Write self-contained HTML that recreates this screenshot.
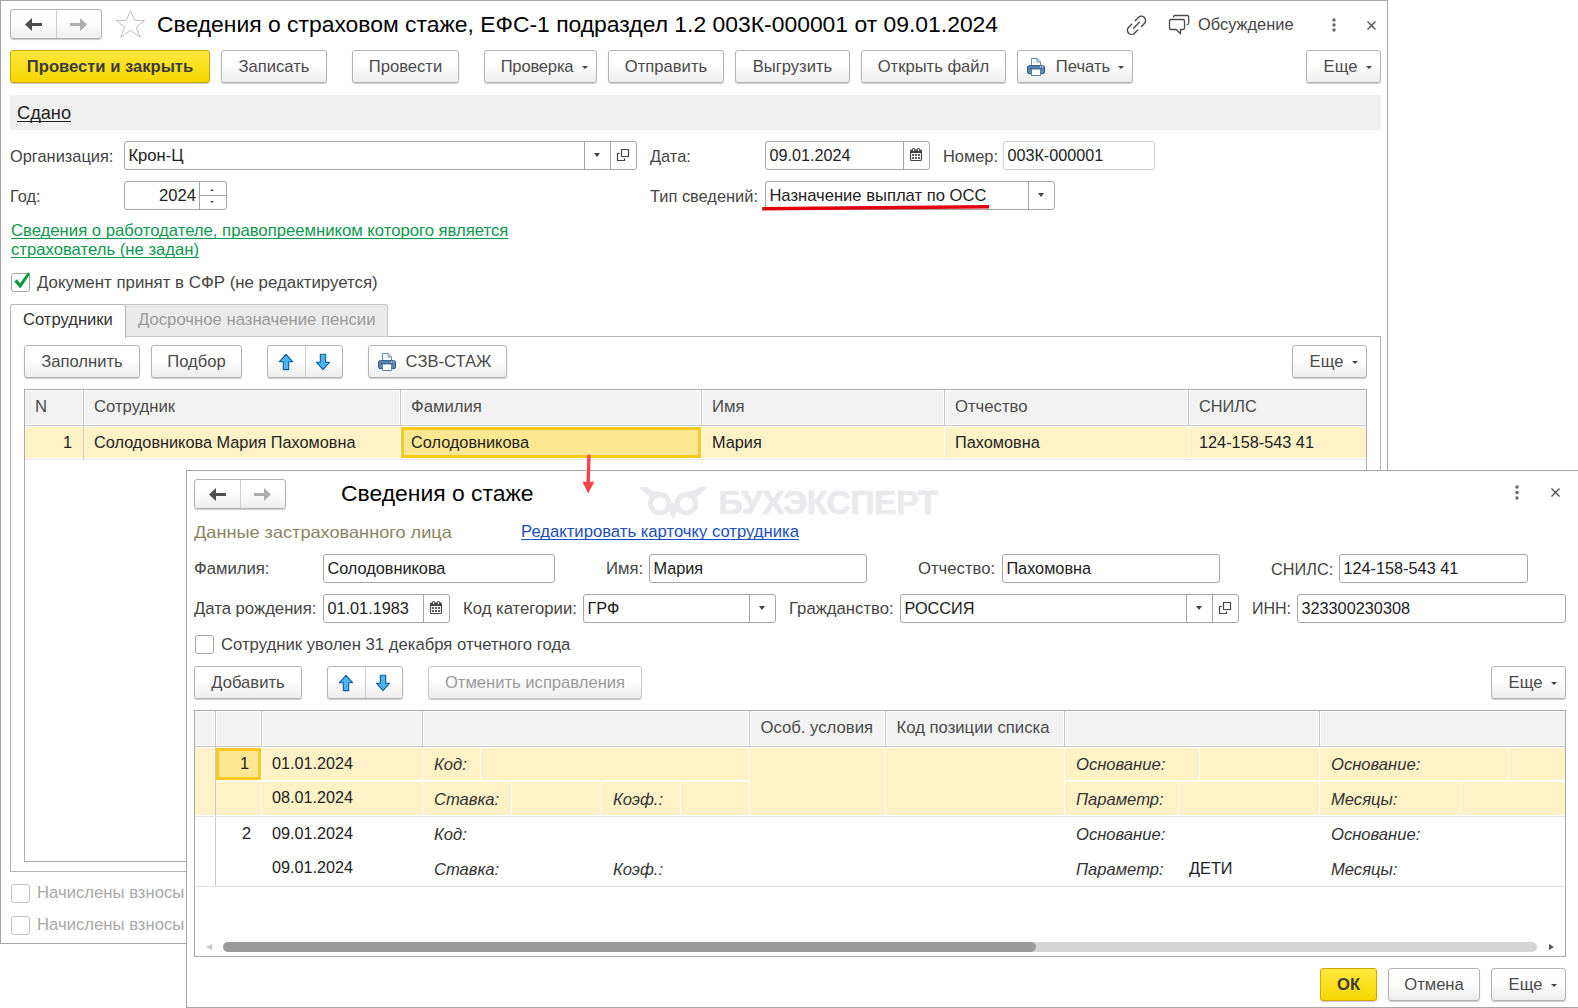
<!DOCTYPE html>
<html lang="ru"><head><meta charset="utf-8"><title>Сведения о страховом стаже</title>
<style>
*{box-sizing:border-box;margin:0;padding:0;text-decoration-skip-ink:none}
html,body{width:1578px;height:1008px;overflow:hidden;background:#fff}
body{position:relative;font-family:"Liberation Sans",sans-serif;font-size:16.6px;color:#333;line-height:20px}
.a{position:absolute;white-space:nowrap}
.btn{position:absolute;height:33px;border:1px solid #b4b4b4;border-radius:3px;background:linear-gradient(#fff 0%,#fff 40%,#ededed 100%);box-shadow:0 1px 1px rgba(0,0,0,.22);color:#4a4a4a;text-align:center;line-height:31px;white-space:nowrap}
.btn.y{background:linear-gradient(#ffe93c,#f7d600);border-color:#c9a800;color:#3c3c3c;font-weight:bold}
.btn.dis{color:#9a9a9a}
.inp{position:absolute;height:29px;border:1px solid #a6a6a6;border-radius:3px;background:#fff;line-height:27px;padding-left:3.4px;color:#222;white-space:nowrap;overflow:hidden}
.inp .sb{position:absolute;top:0;bottom:0;width:26px;border-left:1px solid #a6a6a6}
.lbl{position:absolute;white-space:nowrap;color:#454545;line-height:20px;font-size:16.4px;padding-top:1px}
.tri{position:absolute;width:0;height:0;border-left:4px solid transparent;border-right:4px solid transparent;border-top:5px solid #444}
.cb{position:absolute;width:19px;height:19px;border:1px solid #a6a6a6;border-radius:3px;background:#fff}
.th{position:absolute;background:#f2f2f2;color:#4a4a4a;line-height:33px;font-size:16.7px;padding-left:10px;white-space:nowrap;overflow:hidden}
.td{position:absolute;line-height:33px;font-size:16.3px;padding-left:10px;color:#222;white-space:nowrap;overflow:hidden}
.td.it{font-style:italic;font-size:16.6px;color:#333}
#dlgc .lbl{font-size:16.7px}
#dlgc .inp{font-size:16.3px}
.num{font-size:16.2px}
</style></head><body>
<!-- MAIN WINDOW -->
<div id="main" class="a" style="left:0;top:0;width:1388px;height:944px;border:1px solid #a6a6a6;background:#fff"></div>
<!--MAINSTART-->
<!-- nav buttons -->
<div class="btn" style="left:10px;top:9px;width:92px;height:30px"></div>
<div class="a" style="left:56px;top:10px;width:1px;height:28px;background:#cfcfcf"></div>
<svg class="a" style="left:24px;top:17px" width="19" height="15" viewBox="0 0 19 15"><path d="M1 7.5 L8 1 L8 5.9 L18 5.9 L18 9.1 L8 9.1 L8 14 Z" fill="#4d4d4d"/></svg>
<svg class="a" style="left:69px;top:17px" width="19" height="15" viewBox="0 0 19 15"><path d="M18 7.5 L11 1 L11 5.9 L1 5.9 L1 9.1 L11 9.1 L11 14 Z" fill="#adadad"/></svg>
<!-- star -->
<svg class="a" style="left:115px;top:9px" width="31" height="31" viewBox="0 0 31 31"><path d="M15.50 1.77 L19.79 11.42 L29.64 11.42 L21.25 18.44 L25.25 28.29 L15.50 21.47 L5.65 28.29 L9.55 18.44 L1.46 11.42 L11.31 11.42 Z" fill="#fff" stroke="#b8bfc9" stroke-width="1" stroke-linejoin="miter"/></svg>
<div class="a" style="left:157px;top:9px;font-size:22.9px;line-height:30px;color:#000">Сведения о страховом стаже, ЕФС-1 подраздел 1.2 003К-000001 от 09.01.2024</div>
<!-- right header icons -->
<svg class="a" style="left:1124px;top:13px" width="26" height="26" viewBox="0 0 26 26" fill="none" stroke="#4a4a4a" stroke-width="1.4" stroke-linecap="round"><g transform="translate(12.5 12.3) rotate(-45)"><path d="M2.6 -4.2 L6.9 -4.2 A4.2 4.2 0 0 1 6.9 4.2 L2.6 4.2"/><path d="M-2.6 4.2 L-6.9 4.2 A4.2 4.2 0 0 1 -6.9 -4.2 L-2.6 -4.2"/><path d="M-4.2 0 L4.2 0"/></g></svg>
<svg class="a" style="left:1166px;top:12px" width="26" height="26" viewBox="0 0 26 26" fill="none" stroke="#4a4a4a" stroke-width="1.3" stroke-linejoin="round" stroke-linecap="round"><path d="M7.4 5 Q7.5 3.5 9 3.5 H21.2 Q22.7 3.5 22.7 5.2 V11 Q22.7 12.5 21.2 12.6"/><path d="M5 7.5 H17 Q18.5 7.5 18.5 9 V16 Q18.5 17.5 17 17.5 H14.5 V21.8 L10.3 17.5 H5 Q3.5 17.5 3.5 16 V9 Q3.5 7.5 5 7.5 Z"/></svg>
<div class="lbl" style="left:1198px;top:13px">Обсуждение</div>
<svg class="a" style="left:1330.5px;top:17px" width="6" height="16" viewBox="0 0 6 16"><circle cx="3" cy="3" r="1.7" fill="#666"/><circle cx="3" cy="8" r="1.7" fill="#666"/><circle cx="3" cy="13" r="1.7" fill="#666"/></svg>
<svg class="a" style="left:1366px;top:20px" width="11" height="11" viewBox="0 0 11 11"><path d="M1.5 1.5 L9.5 9.5 M9.5 1.5 L1.5 9.5" stroke="#555" stroke-width="1.4"/></svg>
<!-- command bar -->
<div class="btn y" style="left:10px;top:50px;width:200px">Провести и закрыть</div>
<div class="btn" style="left:221px;top:50px;width:106px">Записать</div>
<div class="btn" style="left:352px;top:50px;width:107px">Провести</div>
<div class="btn" style="left:484px;top:50px;width:113px;padding-right:7px;letter-spacing:-0.2px">Проверка<i class="tri" style="right:8px;top:15px;border-width:3px 3px 0 3px"></i></div>
<div class="btn" style="left:608px;top:50px;width:116px">Отправить</div>
<div class="btn" style="left:735px;top:50px;width:115px">Выгрузить</div>
<div class="btn" style="left:861px;top:50px;width:145px">Открыть файл</div>
<div class="btn" style="left:1017px;top:50px;width:116px;padding-left:24px;padding-right:8px">Печать<i class="tri" style="right:8px;top:15px;border-width:3px 3px 0 3px"></i></div>
<svg class="a prn" style="left:1026px;top:57px" width="20" height="20" viewBox="0 0 20 20"><path d="M5.5 8.5 V1.5 H11 L14.5 5 V8.5 Z" fill="#fff" stroke="#6a8bb0" stroke-width="1"/><path d="M11 1.5 V5 H14.5" fill="none" stroke="#6a8bb0" stroke-width="1"/><rect x="1.5" y="8.7" width="17" height="8" rx="1.6" fill="#5b86b2" stroke="#2f5a8a" stroke-width="1"/><rect x="4" y="11" width="12" height="1.1" fill="#2d5583"/><path d="M5.5 12 V18.5 H14.5 V12 Z" fill="#fff" stroke="#5d7fa6" stroke-width="1"/><rect x="14" y="9.4" width="1" height="1" fill="#fff"/><rect x="16" y="9.4" width="1" height="1" fill="#fff"/></svg>
<div class="btn" style="left:1306px;top:50px;width:75px;padding-right:6px">Еще<i class="tri" style="right:8px;top:15px;border-width:3px 3px 0 3px"></i></div>
<!-- status bar -->
<div class="a" style="left:10px;top:95px;width:1371px;height:35px;background:#f0f0f0"></div>
<div class="a" style="left:17px;top:103px;font-size:18.2px;color:#222;text-decoration:underline;text-underline-offset:2px">Сдано</div>
<!-- row 1 -->
<div class="lbl" style="left:10px;top:145px">Организация:</div>
<div class="inp" style="left:124px;top:141px;width:513px">Крон-Ц<span class="sb" style="right:26px"><i class="tri" style="left:9px;top:11px;border-width:4px 3px 0 3px"></i></span><span class="sb" style="right:0"><svg class="a" style="left:5px;top:6px" width="14" height="14" viewBox="0 0 14 14" fill="none" stroke="#444" stroke-width="1.2"><path d="M5.5 1.5 H12.5 V8.5 H5.5 Z"/><path d="M3.9 5.5 H1.5 V12.5 H8.5 V10.2"/></svg></span></div>
<div class="lbl" style="left:650px;top:145px">Дата:</div>
<div class="inp num" style="left:765px;top:141px;width:165px">09.01.2024<span class="sb" style="right:0;width:26px"><svg class="a cal" style="left:6px;top:6px" width="12" height="13" viewBox="0 0 12 13"><rect x="2" y="0" width="3.2" height="4" rx="1.5" fill="#444"/><rect x="6.9" y="0" width="3.2" height="4" rx="1.5" fill="#444"/><rect x="0" y="1.6" width="12" height="11.4" rx="1.6" fill="#444"/><rect x="1.1" y="5.1" width="9.8" height="6.8" rx="0.4" fill="#fff"/><rect x="3" y="0.9" width="1.2" height="2.2" rx="0.6" fill="#fff"/><rect x="7.9" y="0.9" width="1.2" height="2.2" rx="0.6" fill="#fff"/><g fill="#333"><rect x="2.2" y="6.1" width="1.8" height="1.8"/><rect x="5.1" y="6.1" width="1.8" height="1.8"/><rect x="8.1" y="6.1" width="1.8" height="1.8"/><rect x="2.2" y="9.1" width="1.8" height="1.8"/><rect x="5.1" y="9.1" width="1.8" height="1.8"/><rect x="8.1" y="9.1" width="1.8" height="1.8"/></g></svg></span></div>
<div class="lbl" style="left:943px;top:145px">Номер:</div>
<div class="inp num" style="left:1003px;top:141px;width:152px;border-color:#d0d0d0">003К-000001</div>
<!-- row 2 -->
<div class="lbl" style="left:10px;top:185px">Год:</div>
<div class="inp" style="left:124px;top:181px;width:103px;text-align:right;padding-right:30px">2024<span class="sb" style="right:0;width:27px"><i class="a" style="left:0;right:0;top:13px;height:1px;background:#a6a6a6"></i><i class="tri" style="left:10px;top:6.5px;border-width:0 2.2px 2.6px 2.2px;border-top-color:transparent;border-bottom:2.6px solid #444"></i><i class="tri" style="left:10px;top:19px;border-width:2.6px 2.2px 0 2.2px"></i></span></div>
<div class="lbl" style="left:650px;top:185px">Тип сведений:</div>
<div class="inp" style="left:765px;top:181px;width:290px">Назначение выплат по ОСС<span class="sb" style="right:0;width:26px"><i class="tri" style="left:9px;top:11px;border-width:4px 3px 0 3px"></i></span></div>
<svg class="a" style="left:760px;top:203px" width="232" height="10" viewBox="0 0 232 10"><path d="M2.2 5.7 L229 3.8" stroke="#e2000f" stroke-width="3.4" stroke-linecap="butt"/></svg>
<!-- green link -->
<div class="a" style="left:11px;top:221px;color:#0b9a4e;font-size:16.68px;text-decoration:underline;line-height:19px;text-underline-offset:2px;white-space:normal;width:520px">Сведения о работодателе, правопреемником которого является<br>страхователь (не задан)</div>
<!-- checkbox -->
<div class="cb" style="left:11px;top:273px"></div>
<svg class="a" style="left:13px;top:270.5px" width="18" height="19" viewBox="0 0 18 19"><path d="M1.2 10.5 L4 8.3 L7 12.3 L15 1.3 L17.2 3 L7.3 17.5 Z" fill="#129a40"/></svg>
<div class="lbl" style="left:37px;top:272px;font-size:16.85px">Документ принят в СФР (не редактируется)</div>
<!-- tabs -->
<div class="a" style="left:10px;top:336px;width:1371px;height:536px;border:1px solid #b5b5b5"></div>
<div class="a" style="left:125px;top:304px;width:263px;height:33px;background:#eaeaea;border:1px solid #c6c6c6;border-left:none;border-radius:0 3px 0 0;color:#9a9a9a;line-height:29px;padding-left:13px;font-size:16.7px">Досрочное назначение пенсии</div>
<div class="a" style="left:10px;top:304px;width:116px;height:34px;background:#fff;border:1px solid #b5b5b5;border-bottom:none;border-radius:3px 3px 0 0;color:#333;line-height:29px;padding-left:12px">Сотрудники</div>
<!-- tab toolbar -->
<div class="btn" style="left:24px;top:345px;width:116px">Заполнить</div>
<div class="btn" style="left:151px;top:345px;width:91px">Подбор</div>
<div class="btn" style="left:267px;top:345px;width:76px"></div>
<div class="a" style="left:305px;top:346px;width:1px;height:31px;background:#cfcfcf"></div>
<svg class="a" style="left:278px;top:353px" width="16" height="18" viewBox="0 0 16 18"><path d="M8 1.3 L14.6 8.7 L10.7 8.7 L10.7 16.6 L5.3 16.6 L5.3 8.7 L1.4 8.7 Z" fill="#4db2f1" stroke="#0d5c96" stroke-width="1.1" stroke-linejoin="round"/></svg>
<svg class="a" style="left:315px;top:353px" width="16" height="18" viewBox="0 0 16 18"><path d="M8 16.6 L14.6 9.2 L10.7 9.2 L10.7 1.3 L5.3 1.3 L5.3 9.2 L1.4 9.2 Z" fill="#4db2f1" stroke="#0d5c96" stroke-width="1.1" stroke-linejoin="round"/></svg>
<div class="btn" style="left:368px;top:345px;width:139px;padding-left:22px">СЗВ-СТАЖ</div>
<svg class="a prn" style="left:377px;top:352px" width="20" height="20" viewBox="0 0 20 20"><path d="M5.5 8.5 V1.5 H11 L14.5 5 V8.5 Z" fill="#fff" stroke="#6a8bb0" stroke-width="1"/><path d="M11 1.5 V5 H14.5" fill="none" stroke="#6a8bb0" stroke-width="1"/><rect x="1.5" y="8.7" width="17" height="8" rx="1.6" fill="#5b86b2" stroke="#2f5a8a" stroke-width="1"/><rect x="4" y="11" width="12" height="1.1" fill="#2d5583"/><path d="M5.5 12 V18.5 H14.5 V12 Z" fill="#fff" stroke="#5d7fa6" stroke-width="1"/><rect x="14" y="9.4" width="1" height="1" fill="#fff"/><rect x="16" y="9.4" width="1" height="1" fill="#fff"/></svg>
<div class="btn" style="left:1292px;top:345px;width:75px;padding-right:6px">Еще<i class="tri" style="right:8px;top:15px;border-width:3px 3px 0 3px"></i></div>
<!-- table -->
<div class="a" style="left:24px;top:389px;width:1343px;height:473px;border:1px solid #adadad;background:#fff"></div>
<div class="th" style="left:25px;top:391px;width:58px;height:33px;line-height:31px">N</div>
<div class="th" style="left:84px;top:391px;width:316px;height:33px;line-height:31px">Сотрудник</div>
<div class="th" style="left:401px;top:391px;width:300px;height:33px;line-height:31px">Фамилия</div>
<div class="th" style="left:702px;top:391px;width:242px;height:33px;line-height:31px">Имя</div>
<div class="th" style="left:945px;top:391px;width:243px;height:33px;line-height:31px">Отчество</div>
<div class="th" style="left:1189px;top:391px;width:177px;height:33px;line-height:31px;font-size:16.3px">СНИЛС</div>
<div class="a" style="left:25px;top:424px;width:1341px;height:3px;background:#fff"></div><div class="a" style="left:25px;top:425px;width:1341px;height:1px;background:#c8c8c8"></div>
<div class="a" style="left:25px;top:427px;width:1341px;height:31px;background:#fff2c6"></div>
<div class="a" style="left:25px;top:459px;width:1341px;height:1px;background:#e9e9e9"></div>
<div class="a" style="left:83px;top:426px;width:1px;height:34px;background:#cbcbcb"></div>
<div class="a" style="left:400px;top:426px;width:1px;height:33px;background:#fff"></div>
<div class="a" style="left:701px;top:426px;width:1px;height:33px;background:#fff"></div>
<div class="a" style="left:944px;top:426px;width:1px;height:33px;background:#fff"></div>
<div class="a" style="left:1188px;top:426px;width:1px;height:33px;background:#fff"></div>
<div class="a" style="left:82px;top:390px;width:3px;height:35px;background:#fff"></div><div class="a" style="left:83px;top:390px;width:1px;height:35px;background:#c6c6c6"></div>
<div class="a" style="left:399px;top:390px;width:3px;height:35px;background:#fff"></div><div class="a" style="left:400px;top:390px;width:1px;height:35px;background:#c6c6c6"></div>
<div class="a" style="left:700px;top:390px;width:3px;height:35px;background:#fff"></div><div class="a" style="left:701px;top:390px;width:1px;height:35px;background:#c6c6c6"></div>
<div class="a" style="left:943px;top:390px;width:3px;height:35px;background:#fff"></div><div class="a" style="left:944px;top:390px;width:1px;height:35px;background:#c6c6c6"></div>
<div class="a" style="left:1187px;top:390px;width:3px;height:35px;background:#fff"></div><div class="a" style="left:1188px;top:390px;width:1px;height:35px;background:#c6c6c6"></div>
<div class="td" style="left:25px;top:426px;width:58px;height:33px;text-align:right;padding-right:11px;padding-left:0">1</div>
<div class="td" style="left:84px;top:426px;width:316px;height:33px">Солодовникова Мария Пахомовна</div>
<div class="td" style="left:401px;top:427px;width:300px;height:31px;background:#fde791;border:3px solid #f9c920;line-height:25px;padding-left:7px">Солодовникова</div>
<div class="td" style="left:702px;top:426px;width:242px;height:33px">Мария</div>
<div class="td" style="left:945px;top:426px;width:243px;height:33px">Пахомовна</div>
<div class="td" style="left:1189px;top:426px;width:177px;height:33px">124-158-543 41</div>
<!-- bottom disabled checkboxes -->
<div class="cb" style="left:11px;top:884px;border-color:#c4c4c4"></div>
<div class="lbl" style="left:37px;top:882px;color:#a8a8a8;font-size:16.7px">Начислены взносы</div>
<div class="cb" style="left:11px;top:916px;border-color:#c4c4c4"></div>
<div class="lbl" style="left:37px;top:914px;color:#a8a8a8;font-size:16.7px">Начислены взносы</div>
<!-- red arrow -->
<svg class="a" style="left:580px;top:452px;z-index:50" width="18" height="44" viewBox="0 0 18 44"><path d="M8.9 4.3 L8.2 31" stroke="#f94348" stroke-width="3.4" stroke-linecap="round"/><path d="M2.4 29.8 L14.3 29.8 L8.2 41.6 Z" fill="#f94348"/></svg>
<!--MAINEND-->
<div id="dlg" class="a" style="left:186px;top:470px;width:1393px;height:538px;border:1px solid #a6a6a6;border-right:none;background:#fff;z-index:10"></div>
<div id="dlgc" class="a" style="left:0;top:0;width:1578px;height:1008px;z-index:20">
<!-- nav -->
<div class="btn" style="left:194px;top:479px;width:92px;height:30px"></div>
<div class="a" style="left:240px;top:480px;width:1px;height:28px;background:#cfcfcf"></div>
<svg class="a" style="left:208px;top:487px" width="19" height="15" viewBox="0 0 19 15"><path d="M1 7.5 L8 1 L8 5.9 L18 5.9 L18 9.1 L8 9.1 L8 14 Z" fill="#4d4d4d"/></svg>
<svg class="a" style="left:253px;top:487px" width="19" height="15" viewBox="0 0 19 15"><path d="M18 7.5 L11 1 L11 5.9 L1 5.9 L1 9.1 L11 9.1 L11 14 Z" fill="#adadad"/></svg>
<div class="a" style="left:341px;top:478px;font-size:22.9px;line-height:30px;color:#000">Сведения о стаже</div>
<!-- watermark -->
<svg class="a" style="left:636px;top:484px" width="75" height="40" viewBox="0 0 75 40" fill="#e9e9ee"><circle cx="23.7" cy="19.6" r="9.25" fill="none" stroke="#e9e9ee" stroke-width="5.3"/><circle cx="50.5" cy="19.6" r="9.25" fill="none" stroke="#e9e9ee" stroke-width="5.3"/><path d="M3.1 3 L10.7 3 Q15.5 7.6 23.4 7.6 L15 13.5 Q8 10 3.1 3 Z"/><path d="M71.1 3 L63.5 3 Q58.7 7.6 50.8 7.6 L59.2 13.5 Q66.2 10 71.1 3 Z"/><path d="M37.1 18 L41 24 L41.3 27 L37.3 36.2 L33.1 27 L33.4 24 Z"/></svg>
<div id="wm" class="a" style="left:718.5px;top:484px;font-size:33.6px;line-height:38px;font-weight:bold;color:#e9e9ee;letter-spacing:-0.35px;-webkit-text-stroke:0.7px #e9e9ee">БУХЭКСПЕРТ</div>
<svg class="a" style="left:1514px;top:484px" width="6" height="18" viewBox="0 0 6 18"><circle cx="3" cy="3" r="1.7" fill="#666"/><circle cx="3" cy="8.5" r="1.7" fill="#666"/><circle cx="3" cy="14" r="1.7" fill="#666"/></svg>
<svg class="a" style="left:1550px;top:487px" width="11" height="11" viewBox="0 0 11 11"><path d="M1.5 1.5 L9.5 9.5 M9.5 1.5 L1.5 9.5" stroke="#555" stroke-width="1.4"/></svg>
<div class="a" style="left:194px;top:522px;color:#8a8462;font-size:16.5px;transform:scaleX(1.10);transform-origin:0 0">Данные застрахованного лица</div>
<div class="a" style="left:521px;top:522px;color:#1b4fbd;font-size:16.66px;text-decoration:underline;text-underline-offset:2px">Редактировать карточку сотрудника</div>
<!-- row 1 -->
<div class="lbl" style="left:194px;top:558px">Фамилия:</div>
<div class="inp" style="left:323px;top:554px;width:232px">Солодовникова</div>
<div class="lbl" style="left:606px;top:558px">Имя:</div>
<div class="inp" style="left:649px;top:554px;width:218px">Мария</div>
<div class="lbl" style="left:918px;top:558px">Отчество:</div>
<div class="inp" style="left:1002px;top:554px;width:218px">Пахомовна</div>
<div class="lbl" style="left:1271px;top:558px;font-size:16.3px!important">СНИЛС:</div>
<div class="inp" style="left:1339px;top:554px;width:189px">124-158-543 41</div>
<!-- row 2 -->
<div class="lbl" style="left:194px;top:598px">Дата рождения:</div>
<div class="inp" style="left:323px;top:594px;width:127px">01.01.1983<span class="sb" style="right:0;width:26px"><svg class="a cal" style="left:6px;top:6px" width="12" height="13" viewBox="0 0 12 13"><rect x="2" y="0" width="3.2" height="4" rx="1.5" fill="#444"/><rect x="6.9" y="0" width="3.2" height="4" rx="1.5" fill="#444"/><rect x="0" y="1.6" width="12" height="11.4" rx="1.6" fill="#444"/><rect x="1.1" y="5.1" width="9.8" height="6.8" rx="0.4" fill="#fff"/><rect x="3" y="0.9" width="1.2" height="2.2" rx="0.6" fill="#fff"/><rect x="7.9" y="0.9" width="1.2" height="2.2" rx="0.6" fill="#fff"/><g fill="#333"><rect x="2.2" y="6.1" width="1.8" height="1.8"/><rect x="5.1" y="6.1" width="1.8" height="1.8"/><rect x="8.1" y="6.1" width="1.8" height="1.8"/><rect x="2.2" y="9.1" width="1.8" height="1.8"/><rect x="5.1" y="9.1" width="1.8" height="1.8"/><rect x="8.1" y="9.1" width="1.8" height="1.8"/></g></svg></span></div>
<div class="lbl" style="left:463px;top:598px">Код категории:</div>
<div class="inp" style="left:583px;top:594px;width:193px">ГРФ<span class="sb" style="right:0;width:26px"><i class="tri" style="left:9px;top:11px;border-width:4px 3px 0 3px"></i></span></div>
<div class="lbl" style="left:789px;top:598px">Гражданство:</div>
<div class="inp" style="left:900px;top:594px;width:339px">РОССИЯ<span class="sb" style="right:26px"><i class="tri" style="left:9px;top:11px;border-width:4px 3px 0 3px"></i></span><span class="sb" style="right:0"><svg class="a" style="left:5px;top:6px" width="14" height="14" viewBox="0 0 14 14" fill="none" stroke="#444" stroke-width="1.2"><path d="M5.5 1.5 H12.5 V8.5 H5.5 Z"/><path d="M3.9 5.5 H1.5 V12.5 H8.5 V10.2"/></svg></span></div>
<div class="lbl" style="left:1252px;top:598px;font-size:16px!important">ИНН:</div>
<div class="inp" style="left:1297px;top:594px;width:269px">323300230308</div>
<!-- checkbox -->
<div class="cb" style="left:195px;top:635px"></div>
<div class="lbl" style="left:221px;top:634px;font-size:16.7px">Сотрудник уволен 31 декабря отчетного года</div>
<!-- toolbar -->
<div class="btn" style="left:194px;top:666px;width:108px">Добавить</div>
<div class="btn" style="left:327px;top:666px;width:76px"></div>
<div class="a" style="left:365px;top:667px;width:1px;height:31px;background:#cfcfcf"></div>
<svg class="a" style="left:338px;top:674px" width="16" height="18" viewBox="0 0 16 18"><path d="M8 1.3 L14.6 8.7 L10.7 8.7 L10.7 16.6 L5.3 16.6 L5.3 8.7 L1.4 8.7 Z" fill="#4db2f1" stroke="#0d5c96" stroke-width="1.1" stroke-linejoin="round"/></svg>
<svg class="a" style="left:375px;top:674px" width="16" height="18" viewBox="0 0 16 18"><path d="M8 16.6 L14.6 9.2 L10.7 9.2 L10.7 1.3 L5.3 1.3 L5.3 9.2 L1.4 9.2 Z" fill="#4db2f1" stroke="#0d5c96" stroke-width="1.1" stroke-linejoin="round"/></svg>
<div class="btn dis" style="left:428px;top:666px;width:214px;border-color:#c8c8c8">Отменить исправления</div>
<div class="btn" style="left:1491px;top:666px;width:75px;padding-right:6px">Еще<i class="tri" style="right:8px;top:15px;border-width:3px 3px 0 3px"></i></div>
<!-- table -->
<div class="a" style="left:194px;top:710px;width:1372px;height:247px;border:1px solid #a9a9a9;background:#fff"></div>
<div class="a" style="left:195px;top:712px;width:1370px;height:33px;background:#f2f2f2"></div>
<div class="a" style="left:195px;top:745px;width:1370px;height:3px;background:#fff"></div><div class="a" style="left:195px;top:746px;width:1370px;height:1px;background:#c8c8c8"></div>
<div class="a" style="left:214px;top:711px;width:3px;height:35px;background:#fff"></div><div class="a" style="left:215px;top:711px;width:1px;height:35px;background:#c6c6c6"></div>
<div class="a" style="left:260px;top:711px;width:3px;height:35px;background:#fff"></div><div class="a" style="left:261px;top:711px;width:1px;height:35px;background:#c6c6c6"></div>
<div class="a" style="left:421px;top:711px;width:3px;height:35px;background:#fff"></div><div class="a" style="left:422px;top:711px;width:1px;height:35px;background:#c6c6c6"></div>
<div class="a" style="left:748px;top:711px;width:3px;height:35px;background:#fff"></div><div class="a" style="left:749px;top:711px;width:1px;height:35px;background:#c6c6c6"></div>
<div class="a" style="left:884px;top:711px;width:3px;height:35px;background:#fff"></div><div class="a" style="left:885px;top:711px;width:1px;height:35px;background:#c6c6c6"></div>
<div class="a" style="left:1063px;top:711px;width:3px;height:35px;background:#fff"></div><div class="a" style="left:1064px;top:711px;width:1px;height:35px;background:#c6c6c6"></div>
<div class="a" style="left:1318px;top:711px;width:3px;height:35px;background:#fff"></div><div class="a" style="left:1319px;top:711px;width:1px;height:35px;background:#c6c6c6"></div>
<div class="th" style="left:750px;top:711px;width:135px;height:34px;line-height:33px;font-size:16.7px;background:none;padding-left:10.5px">Особ. условия</div>
<div class="th" style="left:886px;top:711px;width:178px;height:34px;line-height:33px;font-size:16.7px;background:none;padding-left:10.5px">Код позиции списка</div>
<div class="a" style="left:195px;top:748px;width:1370px;height:67px;background:#fff2c6"></div>
<div class="a" style="left:215px;top:747px;width:1px;height:140px;background:#cbcbcb"></div>
<div class="a" style="left:261px;top:748px;width:1px;height:67px;background:#fff"></div>
<div class="a" style="left:422px;top:748px;width:1px;height:67px;background:#fff"></div>
<div class="a" style="left:749px;top:748px;width:1px;height:67px;background:#fff"></div>
<div class="a" style="left:885px;top:748px;width:1px;height:67px;background:#fff"></div>
<div class="a" style="left:1064px;top:748px;width:1px;height:67px;background:#fff"></div>
<div class="a" style="left:1319px;top:748px;width:1px;height:67px;background:#fff"></div>
<div class="a" style="left:216px;top:780px;width:533px;height:2px;background:linear-gradient(#fff 0,#fff 60%,#fff9e2 100%)"></div>
<div class="a" style="left:1065px;top:780px;width:500px;height:2px;background:linear-gradient(#fff 0,#fff 60%,#fff9e2 100%)"></div>
<div class="a" style="left:480px;top:748px;width:1px;height:32px;background:#fff"></div>
<div class="a" style="left:1199px;top:748px;width:1px;height:32px;background:#fff"></div>
<div class="a" style="left:1508px;top:748px;width:1px;height:32px;background:#fff"></div>
<div class="a" style="left:511px;top:782px;width:1px;height:33px;background:#fff"></div>
<div class="a" style="left:601px;top:782px;width:1px;height:33px;background:#fff"></div>
<div class="a" style="left:680px;top:782px;width:1px;height:33px;background:#fff"></div>
<div class="a" style="left:1178px;top:782px;width:1px;height:33px;background:#fff"></div>
<div class="a" style="left:1460px;top:782px;width:1px;height:33px;background:#fff"></div>
<div class="a" style="left:195px;top:816px;width:1370px;height:1px;background:#e4e4e4"></div>
<div class="a" style="left:195px;top:886px;width:1370px;height:1px;background:#e4e4e4"></div>
<div class="td" style="left:216px;top:748px;width:45px;height:32px;background:#fde791;border:3px solid #f9c920;line-height:25px;text-align:right;padding:0 9px 0 0">1</div>
<div class="td num" style="left:262px;top:747px;width:160px;height:34px;line-height:32px">01.01.2024</div>
<div class="td num" style="left:262px;top:781px;width:160px;height:34px;line-height:32px">08.01.2024</div>
<div class="td" style="left:216px;top:817px;width:45px;height:34px;line-height:32px;text-align:right;padding:0 10px 0 0">2</div>
<div class="td num" style="left:262px;top:817px;width:160px;height:34px;line-height:32px">09.01.2024</div>
<div class="td num" style="left:262px;top:851px;width:160px;height:34px;line-height:32px">09.01.2024</div>
<div class="td it" style="left:423px;top:749px;width:57px;height:34px;line-height:32px;padding-left:11px">Код:</div>
<div class="td it" style="left:423px;top:784px;width:88px;height:34px;line-height:32px;padding-left:11px">Ставка:</div>
<div class="td it" style="left:602px;top:784px;width:78px;height:34px;line-height:32px;padding-left:11px">Коэф.:</div>
<div class="td it" style="left:1065px;top:749px;width:134px;height:34px;line-height:32px;padding-left:11px">Основание:</div>
<div class="td it" style="left:1065px;top:784px;width:113px;height:34px;line-height:32px;padding-left:11px">Параметр:</div>
<div class="td it" style="left:1320px;top:749px;width:188px;height:34px;line-height:32px;padding-left:11px">Основание:</div>
<div class="td it" style="left:1320px;top:784px;width:140px;height:34px;line-height:32px;padding-left:11px">Месяцы:</div>
<div class="td it" style="left:423px;top:819px;width:57px;height:34px;line-height:32px;padding-left:11px">Код:</div>
<div class="td it" style="left:423px;top:854px;width:88px;height:34px;line-height:32px;padding-left:11px">Ставка:</div>
<div class="td it" style="left:602px;top:854px;width:78px;height:34px;line-height:32px;padding-left:11px">Коэф.:</div>
<div class="td it" style="left:1065px;top:819px;width:134px;height:34px;line-height:32px;padding-left:11px">Основание:</div>
<div class="td it" style="left:1065px;top:854px;width:113px;height:34px;line-height:32px;padding-left:11px">Параметр:</div>
<div class="td it" style="left:1320px;top:819px;width:188px;height:34px;line-height:32px;padding-left:11px">Основание:</div>
<div class="td it" style="left:1320px;top:854px;width:140px;height:34px;line-height:32px;padding-left:11px">Месяцы:</div>
<div class="td" style="left:1179px;top:852px;width:80px;height:34px;line-height:32px">ДЕТИ</div>
<!-- scrollbar -->
<div class="a" style="left:223px;top:942px;width:1314px;height:10px;border-radius:5px;background:#d6d6d6"></div>
<div class="a" style="left:223px;top:942px;width:813px;height:10px;border-radius:5px;background:#9b9b9b"></div>
<i class="a" style="left:206px;top:943.5px;width:0;height:0;border-top:3.5px solid transparent;border-bottom:3.5px solid transparent;border-right:6px solid #c8c8c8"></i>
<i class="a" style="left:1548.5px;top:944px;width:0;height:0;border-top:3.2px solid transparent;border-bottom:3.2px solid transparent;border-left:5.5px solid #555"></i>
<!-- bottom buttons -->
<div class="btn y" style="left:1320px;top:968px;width:57px">ОК</div>
<div class="btn" style="left:1388px;top:968px;width:92px">Отмена</div>
<div class="btn" style="left:1491px;top:968px;width:75px;padding-right:6px">Еще<i class="tri" style="right:8px;top:15px;border-width:3px 3px 0 3px"></i></div>
</div>
</body></html>
